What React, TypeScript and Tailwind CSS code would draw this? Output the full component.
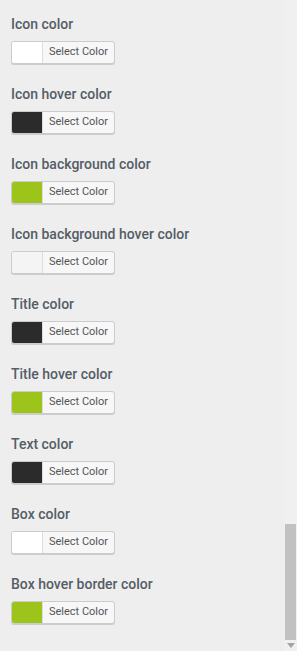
const fields = [
  { label: 'Icon color', swatch: 'bg-white' },
  { label: 'Icon hover color', swatch: 'bg-[#2b2b2b]' },
  { label: 'Icon background color', swatch: 'bg-[#9dc41a]' },
  { label: 'Icon background hover color', swatch: 'bg-[#f4f4f4]' },
  { label: 'Title color', swatch: 'bg-[#2b2b2b]' },
  { label: 'Title hover color', swatch: 'bg-[#9dc41a]' },
  { label: 'Text color', swatch: 'bg-[#2b2b2b]' },
  { label: 'Box color', swatch: 'bg-white' },
  { label: 'Box hover border color', swatch: 'bg-[#9dc41a]' },
];

export default function App() {
  return (
    <div className="flex h-[651px] w-[297px] overflow-hidden bg-[#eeeeee] font-['Roboto',sans-serif]">
      <div className="flex-1 pl-[11px] pt-[14px]">
        {fields.map((f) => (
          <div key={f.label} className="mb-5">
            <div className="h-[19px] text-[14px] leading-5 font-medium text-[#555d66] whitespace-nowrap">
              {f.label}
            </div>
            <button className="mt-2 flex h-[23px] w-[104px] items-stretch overflow-hidden rounded-[3px] border border-[#cccccc] bg-[#f7f7f7] shadow-[0_1px_0_#cccccc]">
              <span className={`w-[31px] border-r border-[#dddddd] ${f.swatch}`}></span>
              <span className="flex flex-1 items-center justify-center text-[11px] text-[#555555]">
                Select Color
              </span>
            </button>
          </div>
        ))}
      </div>
      <div className="flex w-[13px] flex-col bg-[#f0f0f0]">
        <div className="h-[524px]"></div>
        <div className="mx-[1px] h-[116px] bg-[#c1c1c1]"></div>
        <div className="flex flex-1 items-center justify-center">
          <svg width="8" height="5" viewBox="0 0 8 5">
            <path d="M0 0 H8 L4 5 Z" fill="#a3a3a3" />
          </svg>
        </div>
      </div>
    </div>
  );
}
